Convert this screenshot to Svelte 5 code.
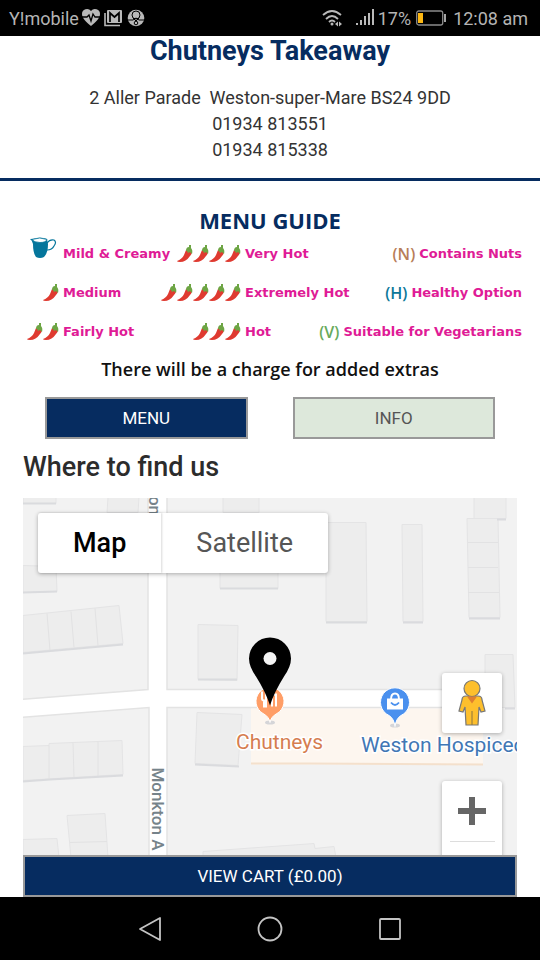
<script>
  const guide = [
    [
      { jug: true, label: 'Mild & Creamy' },
      { chillies: 4, label: 'Very Hot' },
      { code: '(N)', tone: 'nuts', label: 'Contains Nuts' }
    ],
    [
      { chillies: 1, label: 'Medium' },
      { chillies: 5, label: 'Extremely Hot' },
      { code: '(H)', tone: 'healthy', label: 'Healthy Option' }
    ],
    [
      { chillies: 2, label: 'Fairly Hot' },
      { chillies: 3, label: 'Hot' },
      { code: '(V)', tone: 'veg', label: 'Suitable for Vegetarians' }
    ]
  ];

  // outlines of the buildings, in map units
  const buildings = [
    '23,498 56,498 56,504 23,504',
    '108,498 139,498 138,513 107,513',
    '223,498 259,498 259,513 223,513',
    '23,566 56,567 57,592 23,593',
    '23,616 119,606 123,644 23,653',
    '220,560 278,560 278,589 220,589',
    '198,625 238,626 237,681 198,680',
    '326,523 366,523 367,622 326,622',
    '402,525 422,525 423,622 403,622',
    '474,498 506,498 506,519 474,519',
    '467,519 498,519 500,618 469,618',
    '485,655 513,655 515,708 485,708',
    '23,747 49,746 49,744 122,741 123,775 23,781',
    '197,713 242,715 238,766 195,764',
    '67,816 105,814 108,858 71,858',
    '23,840 57,839 59,858 23,858',
    '203,852 314,844 315,849 334,847 336,858 203,858'
  ];
  const shades = [
    'M23 504H56', 'M23 593L57 592', 'M23 654L123 645', 'M220 589H278',
    'M198 680H237', 'M326 623H367', 'M403 623H423', 'M497 520H506', 'M469 619H500',
    'M505 709H515', 'M23 782L50 780L123 776', 'M195 765L239 767'
  ];
</script>

<div class="screen">
  <div class="status">
    <span>Y!mobile</span>
    <svg class="notices" width="64" height="20" viewBox="0 0 64 20" aria-hidden="true">
      <path d="M9 18C4 14 0 10 0 6a5 5 0 0 1 9-3a5 5 0 0 1 9 3c0 4-4 8-9 12z" fill="#b9b9b9" />
      <path d="M0 9h5l2-2 2 6 2-7 2 3h5" fill="none" stroke="#000" stroke-width="1.3" />
      <path d="M23 5v12.500h15" fill="none" stroke="#b9b9b9" stroke-width="1.6" />
      <rect x="25" y="2" width="15" height="13" rx="1" fill="#b9b9b9" />
      <path d="M28 14V5l4.500 4L37 5v9" fill="none" stroke="#000" stroke-width="1.7" />
      <circle cx="54" cy="10" r="8.300" fill="#b9b9b9" />
      <circle cx="54" cy="7" r="4" fill="none" stroke="#000" />
      <path d="M46 12h5l3-2 3 2h5M51 10l3 3 3-3" fill="none" stroke="#000" />
      <circle cx="54" cy="15" r="1.800" fill="#b9b9b9" stroke="#000" />
    </svg>
    <span class="spacer"></span>
    <svg width="54" height="20" viewBox="0 0 54 20" aria-hidden="true">
      <g fill="none" stroke="#b9b9b9" stroke-width="1.8">
        <path d="M1 7q9-8 18 0M4 11q6-6 12 0M7 14q3-3 6 0" />
      </g>
      <circle cx="10" cy="16" r="1.500" fill="#b9b9b9" />
      <path d="M13 16l3-2.500v5zM20 16l-3-2.500v5z" fill="#b9b9b9" />
      <path d="M34 15h2v2h-2zM38 12h2v5h-2zM42 8h2v9h-2zM46 5h2v12h-2zM50 1h2v16h-2z" fill="#b9b9b9" />
    </svg>
    <span>17%</span>
    <svg class="battery" width="31" height="16" viewBox="0 0 31 16" aria-hidden="true">
      <rect x=".7" y="1" width="26" height="14" rx="2" fill="none" stroke="#8a8a8a" stroke-width="1.300" />
      <rect x="2" y="3" width="5" height="10" fill="#fdb813" />
      <path d="M28 4h2v8h-2z" fill="#a5a5a5" />
    </svg>
    <span>12:08 am</span>
  </div>

  <header>
    <h1>Chutneys Takeaway</h1>
    <p>2 Aller Parade &nbsp;Weston-super-Mare BS24 9DD</p>
    <p>01934 813551</p>
    <p>01934 815338</p>
  </header>

  <main>
    <section class="guide">
      <h2>MENU GUIDE</h2>
      {#each guide as row}
        <div class="row">
          {#each row as item}
            <div class="item">
              <span class="mark {item.tone ?? ''}">
                {#if item.jug}
                  <svg class="jug" width="28" height="22" viewBox="0 0 28 22" aria-hidden="true">
                    <path d="M1 2q4 0 6-1q7-1 11 1l1 5q0 9-4 13q-4 2-8 0q-3-4-3-13q-1-4-3-5z" fill="#05769c" />
                    <path d="M3 2.500q8-3 15 0q-1 3-7 3q-6 0-8-3z" fill="#fff" stroke="#05769c" stroke-width=".8" />
                    <path d="M18 6q3-4 7-3q3 2 0 6q-2 4-7 4" fill="none" stroke="#05769c" stroke-width="1.200" />
                  </svg>
                {:else if item.code}
                  {item.code}
                {:else}
                  {#each Array(item.chillies) as _}
                    <svg width="16" height="18" viewBox="0 0 16 18" aria-hidden="true">
                      <path d="M9 5q3-2 5 1q2 2-1 5q-4 6-10 6q-3 0-3-1q5-2 7-6z" fill="#df3a30" />
                      <path d="M9 6q0-4 3-4V0h2v3q2 2 1 6l-2-2-2 1-1-2z" fill="#6da544" />
                    </svg>
                  {/each}
                {/if}
              </span>
              <span class="label">{item.label}</span>
            </div>
          {/each}
        </div>
      {/each}
      <p class="extras">There will be a charge for added extras</p>
    </section>

    <div class="tabs">
      <button class="tab active">MENU</button>
      <button class="tab">INFO</button>
    </div>

    <h2 class="find">Where to find us</h2>

    <div class="map">
      <svg class="canvas" viewBox="23 498 494 358" preserveAspectRatio="xMidYMid slice" role="img" aria-label="Street map">
        <rect x="23" y="498" width="494" height="358" fill="#fff" />
        <g fill="#f2f2f2" stroke="#e3e3e3" stroke-width="1.500">
          <path d="M20 490H148V690L20 700z" />
          <path d="M20 718L149 708V870H20z" />
          <path d="M167 490H530V870H167V708H495V690H167z" />
        </g>
        <g fill="#ededed" stroke="#e4e4e5">
          {#each buildings as points}
            <polygon {points} />
          {/each}
        </g>
        <path d="M47 614l3 37M71 612l3 36M95 609l3 37M468 543h30M468 568h30M468 593h31M49 746v33M73 743l1 35M98 742v35M70 843l37-1" fill="none" stroke="#e2e2e3" />
        {#each shades as d}
          <path {d} fill="none" stroke="#dadbde" stroke-width="2" />
        {/each}
        <path d="M251 709H483V765H251z" fill="#fdf6ef" />
        <path d="M251 764H310L483 765" fill="none" stroke="#f4e0cc" stroke-width="2" />

        <g class="street">
          <text transform="translate(152 768) rotate(90)">Monkton A</text>
          <text transform="translate(149 491) rotate(90)">ton</text>
        </g>

        <ellipse cx="270" cy="723" rx="5" ry="2" fill="#d5d5d8" />
        <path d="M270 723q-1-6-7-9a14 14 0 1 1 14 0q-6 3-7 9z" fill="#ff9e67" stroke="#fff" />
        <path d="M262 692v7q0 2 2 2v6h2v-14M272 707v-12h4v12" fill="none" stroke="#fff" stroke-width="2" />
        <path d="M270 706Q266 693 256 677Q249 667 249 659A21 21 0 0 1 291 659Q291 667 284 677Q274 693 270 706z" fill="#000" />
        <circle cx="270" cy="659" r="6.500" fill="#f4f4f4" />

        <ellipse cx="395" cy="726" rx="5" ry="2" fill="#d5d5d8" />
        <path d="M395 727q-1-8-6-11a14.500 14.500 0 1 1 12 0q-5 3-6 11z" fill="#4a90ee" stroke="#fff" />
        <path d="M387 699h16v11h-16z" fill="#fff" />
        <path d="M391 700q0-6 4-6t4 6" fill="none" stroke="#fff" stroke-width="2" />
        <path d="M391 703q4 5 8 0" fill="none" stroke="#4a90ee" stroke-width="1.800" />

        <text class="place food" x="236" y="749">Chutneys</text>
        <text class="place shop" x="361" y="752">Weston Hospicec</text>
      </svg>

      <div class="types">
        <button class="type on">Map</button>
        <button class="type">Satellite</button>
      </div>

      <div class="controls">
        <button class="control" aria-label="Street View">
          <svg width="28" height="48" viewBox="0 0 28 48" aria-hidden="true">
            <g fill="#fdbf2d" stroke="#777" stroke-width="1.200">
              <path d="M8 17h12q4 0 4 4l3 11-4 1-2-5-1 18H8L7 28l-2 5-4-1 3-11q0-4 4-4z" />
              <circle cx="14" cy="9.500" r="8" />
            </g>
            <path d="M9 17.500h10l-5 7z" fill="#e07f2f" />
            <path d="M14 32v14" stroke="#8a7440" />
          </svg>
        </button>
        <button class="control zoom" aria-label="Zoom in">
          <svg width="28" height="28" viewBox="0 0 28 28" aria-hidden="true">
            <path d="M11 0h6v11h11v6H17v11h-6V17H0v-6h11z" fill="#666" />
          </svg>
        </button>
      </div>
    </div>
  </main>

  <button class="cart">VIEW CART (£0.00)</button>

  <nav>
    <button aria-label="Back">
      <svg width="24" height="26" viewBox="0 0 24 26"><path d="M22 2v22L2 13z" /></svg>
    </button>
    <button aria-label="Home">
      <svg width="26" height="26" viewBox="0 0 26 26"><circle cx="13" cy="13" r="11.500" /></svg>
    </button>
    <button aria-label="Recent apps">
      <svg width="24" height="24" viewBox="0 0 24 24"><rect x="2" y="2" width="20" height="20" rx="1" /></svg>
    </button>
  </nav>
</div>

<style>
  :global(body) {
    margin: 0;
    background: #fff;
  }
  .screen {
    display: flex;
    flex-direction: column;
    min-height: 100vh;
    font-family: Roboto, sans-serif;
    color: #333;
  }
  button {
    margin: 0;
    padding: 0;
    border: 0;
    background: none;
    font: inherit;
    color: inherit;
  }
  h1, h2, p {
    margin: 0;
  }
  svg {
    flex: none;
  }
  .status {
    display: flex;
    align-items: center;
    height: 36px;
    padding: 0 12px 0 9px;
    background: #000;
    color: #b4b4b4;
    font-size: 18px;
  }
  .notices {
    margin-left: 3px;
  }
  .spacer {
    flex: 1;
  }
  .status svg:nth-of-type(2) {
    margin-right: 2px;
  }
  .battery {
    margin: 0 6px 0 5px;
  }
  header {
    padding-bottom: 15px;
    border-bottom: 3px solid #062c60;
    text-align: center;
    font-size: 18px;
    line-height: 26px;
  }
  h1 {
    margin-bottom: 19px;
    font-size: 27px;
    line-height: 30px;
    font-weight: 700;
    color: #062c60;
  }
  main {
    display: flex;
    flex: 1;
    flex-direction: column;
  }
  .guide {
    padding-top: 26px;
    text-align: center;
  }
  .guide h2 {
    font: 700 22px/27px "Open Sans", sans-serif;
    color: #062c60;
  }
  .row {
    display: flex;
    height: 39px;
    padding-right: 18px;
  }
  .item {
    display: flex;
    flex: none;
    align-items: center;
    gap: 4px;
  }
  .item:first-child {
    width: 160px;
  }
  .item:last-child {
    margin-left: auto;
  }
  .mark {
    display: flex;
    flex: none;
    box-sizing: border-box;
    justify-content: flex-end;
    font: 600 16px/20px "Open Sans", sans-serif;
  }
  .jug {
    margin: 0 2px 11px 0;
  }
  .item:first-child .mark {
    width: 59px;
  }
  .item:nth-child(2) .mark {
    width: 81px;
  }
  .nuts {
    color: #b87d58;
  }
  .healthy {
    color: #0d7899;
  }
  .veg {
    color: #68aa5b;
  }
  .label {
    font: 700 13px/20px "DejaVu Sans", sans-serif;
    color: #df1b96;
    white-space: nowrap;
  }
  .extras {
    margin-top: 5px;
    font: 600 18px/26px "Open Sans", sans-serif;
    color: #111;
  }
  .tabs {
    display: flex;
    gap: 45px;
    padding: 15px 45px 0;
  }
  .tab, .cart {
    box-sizing: border-box;
    height: 42px;
    border: 2px solid #999;
    font-size: 17px;
  }
  .tab {
    flex: 1;
    background: #dde8db;
    color: #555;
  }
  .active, .cart {
    background: #062c60;
    color: #fff;
  }
  .find {
    margin: 13px 23px 16px;
    font-size: 27px;
    line-height: 30px;
    font-weight: 500;
    color: #2c2c2c;
  }
  .map {
    position: relative;
    flex: 1;
    min-height: 340px;
    margin: 0 23px;
    overflow: hidden;
  }
  .canvas {
    position: absolute;
    inset: 0;
    width: 100%;
    height: 100%;
  }
  .street {
    font-size: 17px;
    font-weight: 500;
    fill: #76838a;
  }
  .place {
    font-size: 21px;
    stroke: #fff;
    stroke-width: 3px;
    paint-order: stroke;
  }
  .food {
    fill: #d67d50;
  }
  .shop {
    fill: #4177b5;
  }
  .types {
    position: absolute;
    top: 15px;
    left: 15px;
    display: flex;
    border-radius: 3px;
    background: #fff;
    box-shadow: 0 1px 4px rgba(0, 0, 0, 0.3);
  }
  .type {
    height: 60px;
    padding: 0 35px;
    font-size: 27px;
    color: #565656;
  }
  .on {
    font-weight: 500;
    color: #000;
    box-shadow: 1px 0 2px rgba(0, 0, 0, 0.15);
  }
  .controls {
    position: absolute;
    top: 175px;
    right: 15px;
    display: flex;
    flex-direction: column;
    gap: 48px;
  }
  .control {
    display: grid;
    place-items: center;
    width: 60px;
    height: 60px;
    border-radius: 3px;
    background: #fff;
    box-shadow: 0 1px 4px rgba(0, 0, 0, 0.3);
  }
  .zoom {
    height: 120px;
    align-content: start;
    padding-top: 16px;
  }
  .zoom::after {
    content: "";
    width: 45px;
    height: 1px;
    margin-top: 16px;
    background: #ddd;
  }
  .cart {
    margin: 0 23px;
  }
  nav {
    display: flex;
    justify-content: center;
    gap: 60px;
    height: 63px;
    background: #000;
  }
  nav button {
    display: grid;
    place-items: center;
    width: 60px;
  }
  nav svg {
    fill: none;
    stroke: #c4c4c4;
    stroke-width: 1.8;
    stroke-linejoin: round;
  }
</style>
